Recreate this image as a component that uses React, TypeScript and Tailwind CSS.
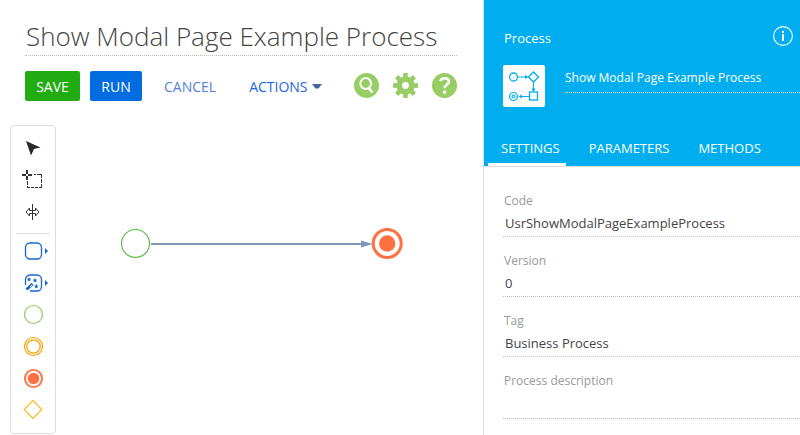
import type { ReactNode } from "react";

const fontStack = "font-['Open_Sans','Noto_Sans',sans-serif]";

function CursorIcon() {
  return (
    <svg width="32" height="32" viewBox="0 0 32 32" aria-hidden="true">
      <path d="M9 9 L23.500 15.500 L17 17 L14 23.500 Z" fill="#2b2b2b" />
    </svg>
  );
}

function MarqueeIcon() {
  return (
    <svg width="32" height="32" viewBox="0 0 32 32" fill="none" stroke="#333" aria-hidden="true">
      <path d="M5 11h4M11 11h4M10 6v4M10 12v4" strokeWidth="2" />
      <path d="M17 10.500h2M20 10.500h4" />
      <path d="M10.500 17v6.500M24.500 10v14" strokeDasharray="4 1" />
      <path d="M10 23.500h15" strokeDasharray="3 1" />
    </svg>
  );
}

function SpaceIcon() {
  return (
    <svg width="32" height="32" viewBox="0 0 32 32" fill="none" stroke="#333" aria-hidden="true">
      <path d="M15.500 8v16" />
      <path d="M15 14.500h-2.500v-2.500l-3.500 4 3.500 4v-2.500h2.500M16 14.500h2.500v-2.500l3.500 4-3.500 4v-2.500h-2.500" />
    </svg>
  );
}

function TaskIcon() {
  return (
    <svg width="32" height="32" viewBox="0 0 32 32" fill="none" stroke="#1468cf" aria-hidden="true">
      <rect x="8.500" y="8" width="16" height="16" rx="4.500" strokeWidth="1.300" />
      <path d="M28 13v6l3-3z" fill="#1468cf" stroke="none" />
    </svg>
  );
}

function WandIcon() {
  return (
    <svg width="32" height="32" viewBox="0 0 32 32" fill="none" stroke="#1468cf" aria-hidden="true">
      <path d="M8.500 18v-5.500a4.500 4.500 0 0 1 4.500-4.500h7a4.500 4.500 0 0 1 4.500 4.500v7a4.500 4.500 0 0 1-4.500 4.500h-7" strokeWidth="1.300" />
      <path d="M9.500 22.500l6-5.500" strokeWidth="3" />
      <path d="M13 20l2-2" stroke="#fff" strokeWidth="1" />
      <g fill="#1468cf" stroke="none">
        <path d="M12 10l.7 1.500 1.600.2-1.200 1.100.3 1.600-1.400-.8-1.400.8.3-1.600-1.200-1.100 1.600-.2z" />
        <path d="M18 11l.7 1.500 1.600.2-1.200 1.100.3 1.600-1.400-.8-1.400.8.3-1.600-1.200-1.100 1.600-.2z" />
        <path d="M19.300 17l.7 1.500 1.600.2-1.200 1.100.3 1.600-1.400-.8-1.400.8.3-1.600-1.200-1.100 1.600-.2z" />
        <path d="M28 13v6l3-3z" />
      </g>
    </svg>
  );
}

function StartIcon() {
  return (
    <svg width="32" height="32" viewBox="0 0 32 32" fill="none" aria-hidden="true">
      <circle cx="16.500" cy="15.500" r="9" stroke="#8ecb60" strokeWidth="1.200" />
    </svg>
  );
}

function IntermediateIcon() {
  return (
    <svg width="32" height="32" viewBox="0 0 32 32" fill="none" stroke="#f8a000" aria-hidden="true">
      <circle cx="16.500" cy="15.500" r="9" strokeWidth="1.200" />
      <circle cx="16.500" cy="15.500" r="6.700" strokeWidth="1.200" />
    </svg>
  );
}

function EndIcon() {
  return (
    <svg width="32" height="32" viewBox="0 0 32 32" fill="none" aria-hidden="true">
      <circle cx="16.500" cy="15.500" r="8.600" stroke="#ff7043" strokeWidth="1.900" />
      <circle cx="16.500" cy="15.500" r="5.700" fill="#ff7043" />
    </svg>
  );
}

function GatewayIcon() {
  return (
    <svg width="32" height="32" viewBox="0 0 32 32" fill="none" aria-hidden="true">
      <path d="M16 5.500l8.800 9-8.800 9-8.800-9z" stroke="#fbc02d" strokeWidth="1.300" />
    </svg>
  );
}

function ToolButton({ label, children }: { label: string; children: ReactNode }) {
  return (
    <button type="button" aria-label={label} className="ml-px size-8">
      {children}
    </button>
  );
}

function Toolbar() {
  return (
    <div className="ml-[10px] flex w-[46px] shrink-0 flex-col rounded border border-[#dcdcdc] px-[5px] py-[6px]">
      <div className="flex flex-col">
        <ToolButton label="Select"><CursorIcon /></ToolButton>
        <ToolButton label="Select area"><MarqueeIcon /></ToolButton>
        <ToolButton label="Move space"><SpaceIcon /></ToolButton>
      </div>
      <hr className="mt-[5px] mb-px border-[#dcdcdc]" />
      <div className="flex flex-col">
        <ToolButton label="User task"><TaskIcon /></ToolButton>
        <ToolButton label="System action"><WandIcon /></ToolButton>
        <ToolButton label="Start event"><StartIcon /></ToolButton>
        <ToolButton label="Intermediate event"><IntermediateIcon /></ToolButton>
        <ToolButton label="End event"><EndIcon /></ToolButton>
        <ToolButton label="Gateway"><GatewayIcon /></ToolButton>
      </div>
    </div>
  );
}

function Diagram() {
  return (
    <svg className="min-w-0 flex-1" fill="none" role="img" aria-label="Process diagram">
      <circle cx="79.500" cy="118.500" r="14" stroke="#5bba47" strokeWidth="1.200" />
      <path d="M95 119h212" stroke="#8296b8" strokeWidth="2" />
      <path d="M305 115.500l12 3.500-12 3.500z" fill="#8296b8" />
      <circle cx="331.200" cy="118.500" r="14" stroke="#ff7043" strokeWidth="3" />
      <circle cx="331.200" cy="118.500" r="8.200" fill="#ff7043" />
    </svg>
  );
}

function SearchIcon() {
  return (
    <svg width="25" height="25" viewBox="0.5 0.5 25 25" fill="none" aria-hidden="true">
      <circle cx="13" cy="13" r="12.500" fill="#97cd64" />
      <circle cx="12.200" cy="11" r="5.400" stroke="#fff" strokeWidth="2" />
      <path d="M14.800 15l4.200 5" stroke="#fff" strokeWidth="2.600" />
    </svg>
  );
}

const gearAngles = [0, 45, 90, 135, 180, 225, 270, 315];

function GearIcon() {
  return (
    <svg width="25" height="25" viewBox="0.5 0.5 25 25" fill="none" aria-hidden="true">
      <g fill="#97cd64">
        {gearAngles.map((angle) => (
          <rect key={angle} x="10.700" y="0.500" width="4.600" height="7" transform={`rotate(${angle} 13 13)`} />
        ))}
      </g>
      <circle cx="13" cy="13" r="6.300" stroke="#97cd64" strokeWidth="5.800" />
    </svg>
  );
}

function HelpIcon() {
  return (
    <svg width="25" height="25" viewBox="0.5 0.5 25 25" fill="none" aria-hidden="true">
      <circle cx="13" cy="13" r="12.500" fill="#97cd64" />
      <path d="M8.800 8.600c.7-2 2.200-2.900 4.300-2.900 2.500 0 4.300 1.300 4.300 3.400 0 3.200-4.300 3.200-4.300 6.600" stroke="#fff" strokeWidth="2.500" />
      <rect x="11.600" y="18.200" width="3" height="3" fill="#fff" />
    </svg>
  );
}

function ProcessLogo() {
  return (
    <svg className="shrink-0" width="42" height="42" viewBox="0 0 42 42" fill="none" stroke="#00aeef" aria-hidden="true">
      <rect width="42" height="42" rx="2" fill="#fff" stroke="none" />
      <circle cx="10.500" cy="12" r="4" strokeWidth="1.300" />
      <path d="M15 12h8M30.500 17v7M26 31.500h-8" />
      <path d="M30.500 7l5 5-5 5-5-5z" strokeWidth="1.300" />
      <rect x="26.500" y="27" width="8" height="8" strokeWidth="1.300" />
      <circle cx="10.500" cy="31.500" r="4" strokeWidth="1.200" />
      <circle cx="10.500" cy="31.500" r="1.500" strokeWidth="1.200" />
      <path d="M22 10l3.500 2-3.500 2zM28.500 23.500h4l-2 3.500zM19 29.500v4l-3.500-2z" fill="#00aeef" stroke="none" />
    </svg>
  );
}

function InfoIcon() {
  return (
    <svg width="20" height="20" viewBox="0 0 20 20" fill="none" aria-hidden="true">
      <circle cx="10" cy="10" r="9.400" stroke="#fff" strokeWidth="1.100" />
      <path d="M10 5v2M10 8v7" stroke="#fff" strokeWidth="2" />
    </svg>
  );
}

const fieldLabel = "pl-px text-[12px] leading-5 text-[#999]";
const fieldInput =
  "w-full border-b border-dotted border-[#bbb] bg-transparent pb-[2px] pl-[2px] text-[13px] text-[#444] outline-none";

function Field({ id, label, value }: { id: string; label: string; value: string }) {
  return (
    <div className="flex flex-col">
      <label htmlFor={id} className={fieldLabel}>{label}</label>
      <input id={id} defaultValue={value} className={`${fieldInput} h-[26px]`} />
    </div>
  );
}

function Tab({ label, selected = false }: { label: string; selected?: boolean }) {
  return (
    <button
      type="button"
      role="tab"
      aria-selected={selected}
      className={`h-8 border-b-[3px] pr-[6px] pl-[13px] text-[13px] ${selected ? "border-white" : "border-transparent"}`}
    >
      {label}
    </button>
  );
}

export default function App() {
  return (
    <div className={`flex min-h-screen bg-white ${fontStack}`}>
      <main className="flex min-w-0 flex-1 flex-col pb-[2px]">
        <header className="pr-[26px] pl-[25px]">
          <input
            aria-label="Process title"
            defaultValue="Show Modal Page Example Process"
            className="mt-4 h-10 w-full border-b border-dotted border-[#bbb] bg-transparent pl-px text-[26px] font-light text-[#444] outline-none"
          />
          <div className="mt-[15px] flex h-[30px] items-center text-[14px]">
            <button type="button" className="h-full w-[55px] rounded-[2px] bg-[#22ac14] text-white">SAVE</button>
            <button type="button" className="ml-[10px] h-full w-[52px] rounded-[2px] bg-[#006ce0] text-white">RUN</button>
            <button type="button" className="ml-[22px] text-[#5680dd]">CANCEL</button>
            <button type="button" className="ml-[33px] flex items-center gap-1 text-[#1a66df]">
              ACTIONS
              <svg width="10" height="5" viewBox="0 0 10 5" aria-hidden="true">
                <path d="M0 0h10l-3.500 4.500h-3z" fill="#4666a0" />
              </svg>
            </button>
            <div className="ml-auto flex gap-[14px] pb-[2px]">
              <button type="button" aria-label="Search"><SearchIcon /></button>
              <button type="button" aria-label="Settings"><GearIcon /></button>
              <button type="button" aria-label="Help"><HelpIcon /></button>
            </div>
          </div>
        </header>
        <section className="mt-6 flex flex-1">
          <Toolbar />
          <Diagram />
        </section>
      </main>
      <aside className="w-[317px] shrink-0 border-l border-[#dcdcdc]">
        <div className="border-b border-[#dcdcdc] bg-[#00aeef] text-white">
          <div className="flex items-start justify-between pt-[26px] pr-[7px] pl-5">
            <h2 className="pt-[2px] text-[13px] leading-5">Process</h2>
            <button type="button" aria-label="Information"><InfoIcon /></button>
          </div>
          <div className="mt-[17px] flex gap-5 pl-[19px]">
            <ProcessLogo />
            <input
              aria-label="Process name"
              defaultValue="Show Modal Page Example Process"
              className="h-7 min-w-0 flex-1 border-b border-dotted border-white bg-transparent pb-[2px] text-[12px] outline-none"
            />
          </div>
          <div role="tablist" className="mt-[27px] flex gap-[10px] pl-1">
            <Tab label="SETTINGS" selected />
            <Tab label="PARAMETERS" />
            <Tab label="METHODS" />
          </div>
        </div>
        <div className="flex flex-col gap-[14px] pt-6 pl-[19px]">
          <Field id="code" label="Code" value="UsrShowModalPageExampleProcess" />
          <Field id="version" label="Version" value="0" />
          <Field id="tag" label="Tag" value="Business Process" />
          <div className="flex flex-col">
            <label htmlFor="description" className={fieldLabel}>Process description</label>
            <textarea id="description" rows={1} className={`${fieldInput} h-7 resize-none`} />
          </div>
        </div>
      </aside>
    </div>
  );
}
